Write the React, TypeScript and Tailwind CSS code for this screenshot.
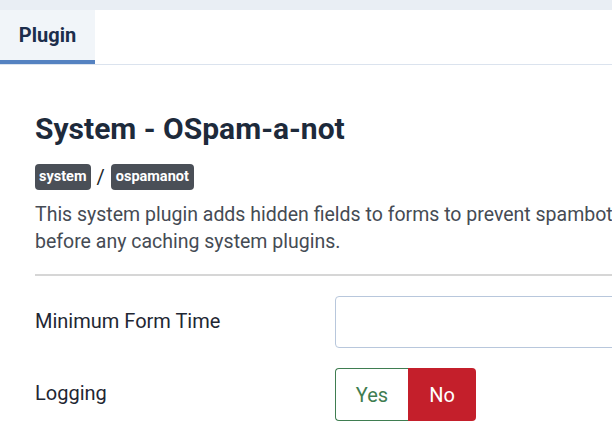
export default function App() {
  return (
    <div className="w-[612px] h-[431px] overflow-hidden bg-white font-['Roboto',sans-serif]">
      <div className="h-[10px] bg-[#e9eef4]" />
      <div className="flex border-b border-[#dbe3ee]">
        <div className="w-[95px] h-[54px] flex items-center justify-center bg-[#f1f5f9] border-b-4 border-[#5582c1]">
          <span className="text-[20px] font-bold text-[#1c2e4c]">Plugin</span>
        </div>
      </div>

      <div className="w-[900px] pl-[35px] pt-[46px]">
        <h1 className="text-[30px] leading-[36px] font-bold text-[#1d2a3b]">System - OSpam-a-not</h1>
        <div className="flex items-center gap-[6px] mt-[15px]">
          <span className="h-[26px] px-[4px] flex items-center rounded-[4px] bg-[#4a4f57] text-white text-[14.5px] font-bold">system</span>
          <span className="text-[20px] text-[#22262a]">/</span>
          <span className="h-[26px] px-[5px] flex items-center rounded-[4px] bg-[#4a4f57] text-white text-[14.5px] font-bold">ospamanot</span>
        </div>
        <p className="mt-[9px] text-[19.5px] leading-[27px] text-[#454b54] whitespace-nowrap">
          This system plugin adds hidden fields to forms to prevent spambots from submitting them.
          <br />
          before any caching system plugins.
        </p>
        <div className="mt-[19px] h-[2px] bg-[#d6d6d6]" />

        <div className="flex items-start mt-[20px]">
          <label className="w-[300px] pt-[10px] text-[20px] text-[#1f2733]">Minimum Form Time</label>
          <div className="w-[400px] h-[52px] rounded-[4px] border border-[#b8c7dc] bg-white" />
        </div>

        <div className="flex items-start mt-[20px]">
          <label className="w-[300px] pt-[10px] text-[20px] text-[#1f2733]">Logging</label>
          <div className="flex h-[53px]">
            <div className="w-[73px] flex items-center justify-center border border-r-0 border-[#3f7d51] rounded-l-[4px] text-[20px] text-[#3f7d51]">Yes</div>
            <div className="w-[68px] flex items-center justify-center bg-[#c41f2b] rounded-r-[4px] text-[20px] text-white">No</div>
          </div>
        </div>
      </div>
    </div>
  )
}
